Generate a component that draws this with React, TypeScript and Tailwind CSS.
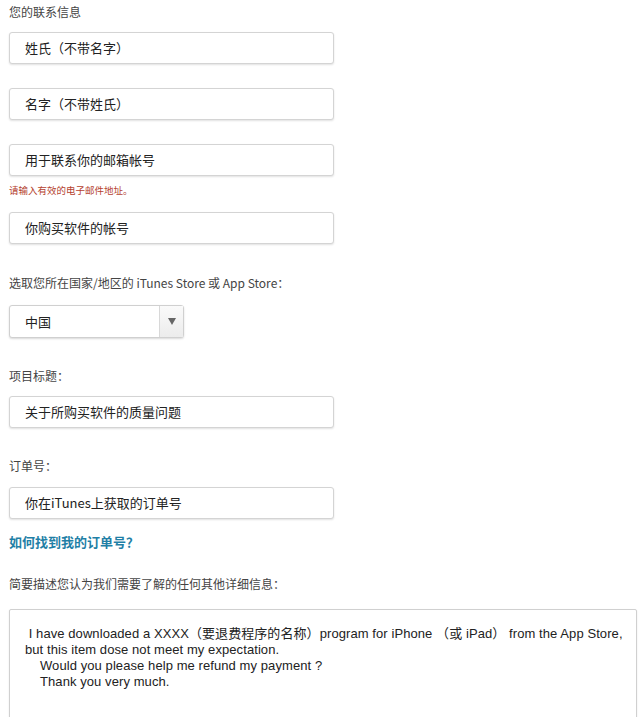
const cjk = { fontFamily: '"Noto Sans CJK SC", "Liberation Sans", sans-serif' }

function Field({ text, className = '' }: { text: string; className?: string }) {
  return (
    <div
      className={`flex h-[32px] w-[325px] items-center rounded-[3px] border border-[#d4d4d4] bg-white pl-[15px] text-[13px] text-[#222] shadow-[0_1px_2px_rgba(0,0,0,0.12)] ${className}`}
    >
      {text}
    </div>
  )
}

function Label({ text, className = '' }: { text: string; className?: string }) {
  return <div className={`text-[12px] leading-[16px] text-[#444] ${className}`}>{text}</div>
}

export default function App() {
  return (
    <div className="min-h-[717px] overflow-hidden bg-white pl-[9px] pt-[4px]" style={cjk}>
      <Label text="您的联系信息" />
      <Field text="姓氏（不带名字）" className="mt-[12px]" />
      <Field text="名字（不带姓氏）" className="mt-[24px]" />
      <Field text="用于联系你的邮箱帐号" className="mt-[24px]" />
      <div className="mt-[7px] text-[9.5px] leading-[14px] text-[#b5422f]">请输入有效的电子邮件地址。</div>
      <Field text="你购买软件的帐号" className="mt-[15px]" />

      <Label text="选取您所在国家/地区的 iTunes Store 或 App Store：" className="mt-[31px]" />
      <div className="mt-[14px] flex h-[33px] w-[175px] rounded-[3px] border border-[#d0d0d0] bg-white text-[13px] text-[#222] shadow-[0_1px_2px_rgba(0,0,0,0.15)]">
        <div className="flex flex-1 items-center pl-[15px]">中国</div>
        <div className="flex w-[24px] items-center justify-center border-l border-[#d8d8d8] bg-gradient-to-b from-[#fafafa] to-[#ececec]">
          <svg width="8" height="7" viewBox="0 0 8 7">
            <path d="M0 0h8L4 7z" fill="#666" />
          </svg>
        </div>
      </div>

      <Label text="项目标题：" className="mt-[30px]" />
      <Field text="关于所购买软件的质量问题" className="mt-[12px]" />

      <Label text="订单号：" className="mt-[30px]" />
      <Field text="你在iTunes上获取的订单号" className="mt-[13px]" />

      <div className="mt-[14px] text-[13px] font-bold leading-[18px] text-[#1f7fa6]">如何找到我的订单号？</div>

      <Label text="简要描述您认为我们需要了解的任何其他详细信息：" className="mt-[25px]" />
      <div
        className="mt-[17px] h-[140px] w-[628px] whitespace-nowrap rounded-[2px] border border-[#d0d0d0] bg-white pl-[15px] pt-[16px] text-[13px] leading-[16px] tracking-[0.08px] text-[#222] shadow-[0_1px_2px_rgba(0,0,0,0.1)]"
        style={{ fontFamily: '"Liberation Sans", "Noto Sans CJK SC", sans-serif' }}
      >
        <div>&nbsp;I have downloaded a XXXX（要退费程序的名称）program for iPhone （或 iPad） from the App Store,</div>
        <div>but this item dose not meet my expectation.</div>
        <div className="pl-[15px]">Would you please help me refund my payment ?</div>
        <div className="pl-[15px]">Thank you very much.</div>
      </div>
    </div>
  )
}
